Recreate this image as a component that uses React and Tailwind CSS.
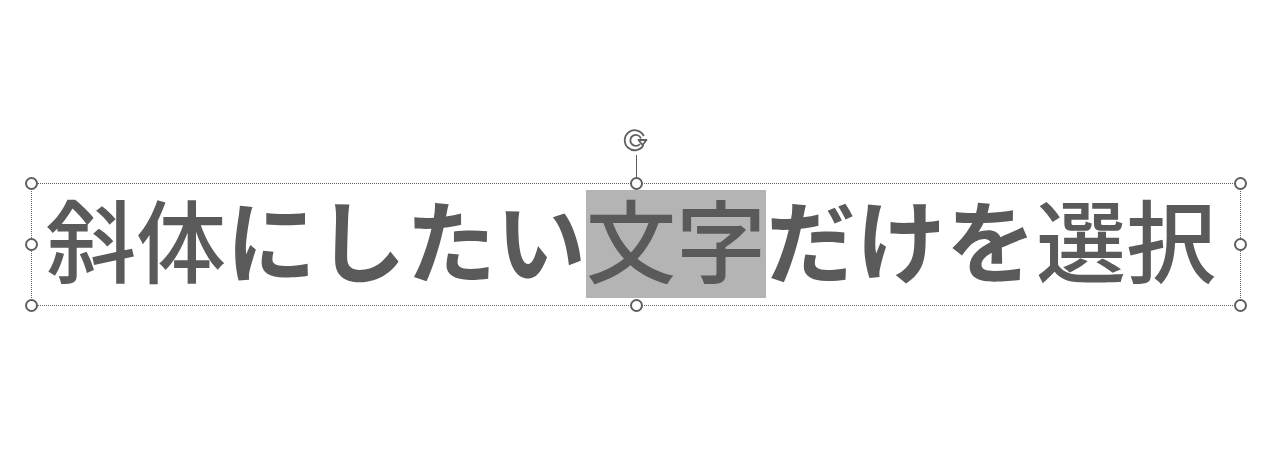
import React from "react";

function Handle({ className }) {
  return (
    <span
      className={`absolute w-[13px] h-[13px] rounded-full bg-white border-2 border-[#5f5f5f] ${className}`}
    />
  );
}

function RotateIcon() {
  return (
    <svg width="28" height="28" viewBox="0 0 28 28" fill="none" stroke="#5f5f5f" strokeWidth="1.8">
      <path d="M21.5 18 A10 10 0 1 1 21.8 9" />
      <path d="M18 17 A5.5 5.5 0 1 1 19 11.5" />
      <path d="M16.5 13 L24.5 13 L20.5 18 Z" fill="white" strokeLinejoin="round" />
    </svg>
  );
}

export default function App() {
  return (
    <div className="w-[1280px] h-[465px] bg-white overflow-hidden">
      <div className="relative ml-[31px] mt-[183px] w-[1210px] h-[123px] border border-dotted border-[#5f5f5f] pl-[14px] pt-[6px]">
        {/* rotation handle */}
        <div className="absolute left-[590px] -top-[57px] flex flex-col items-center">
          <RotateIcon />
          <span className="w-px h-[29px] bg-[#5f5f5f]" />
        </div>

        <Handle className="-left-[7px] -top-[7px]" />
        <Handle className="left-[598px] -top-[7px]" />
        <Handle className="-right-[7px] -top-[7px]" />
        <Handle className="-left-[7px] top-[54px]" />
        <Handle className="-right-[7px] top-[54px]" />
        <Handle className="-left-[7px] -bottom-[7px]" />
        <Handle className="left-[598px] -bottom-[7px]" />
        <Handle className="-right-[7px] -bottom-[7px]" />

        {/* kanji a touch lighter than the kana, as in the slide font */}
        <p className="font-['Noto_Sans_CJK_JP',sans-serif] font-bold text-[90px] leading-[94px] text-[#5a5a5a] whitespace-nowrap">
          <span className="font-medium">斜体</span>
          にしたい
          <span className="inline-block bg-[#b4b4b4] pb-[14px] font-medium">文字</span>
          だけを
          <span className="font-medium">選択</span>
        </p>
      </div>
    </div>
  );
}
